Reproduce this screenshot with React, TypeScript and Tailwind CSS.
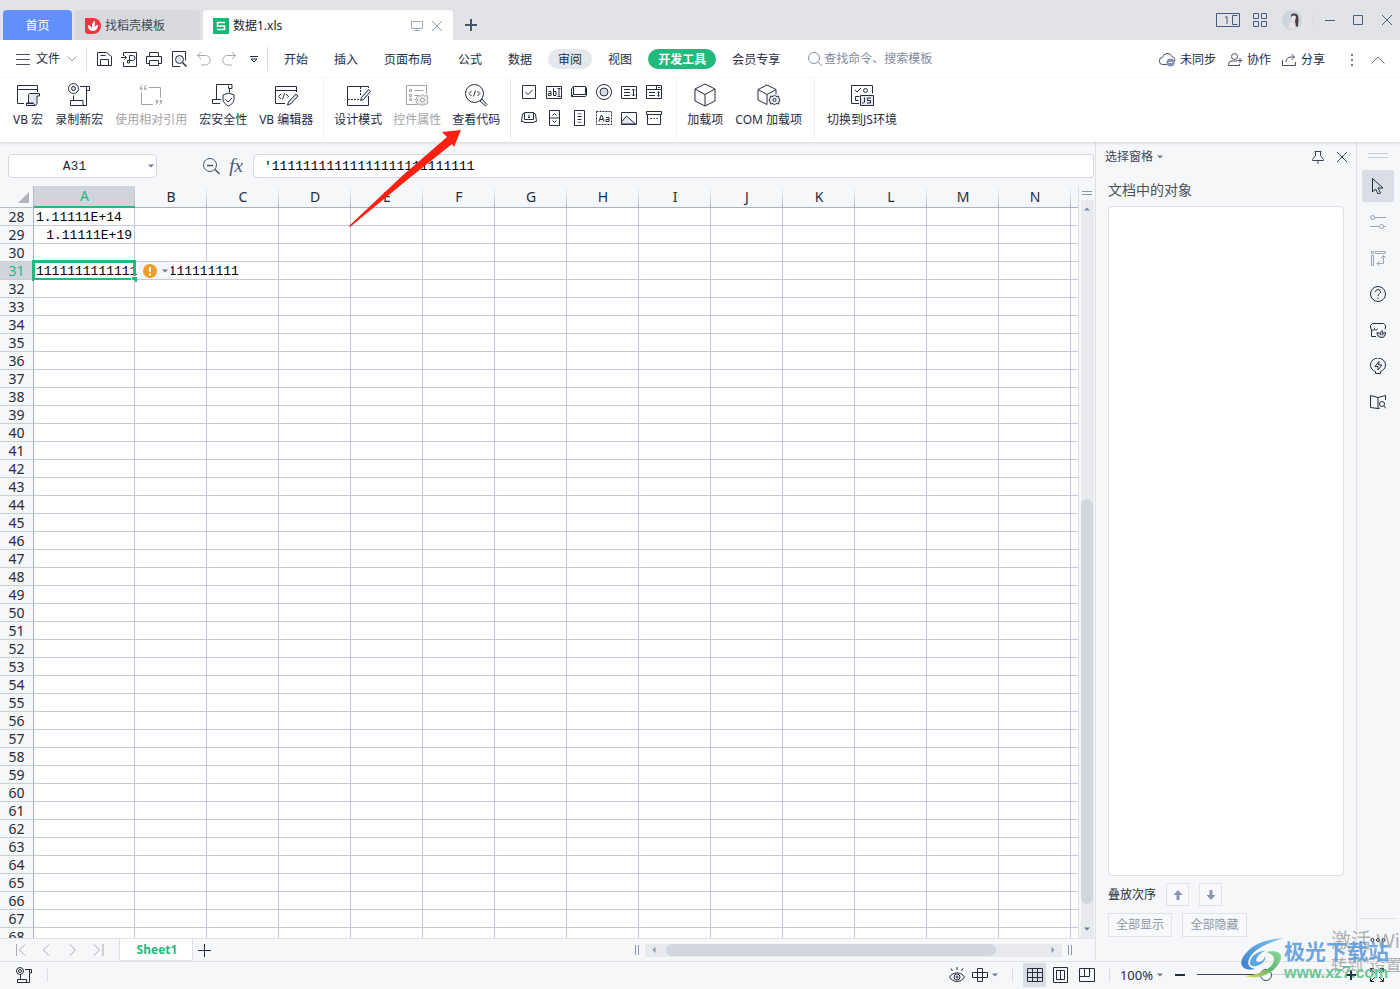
import type { ReactNode } from 'react';

const columns = ['A', 'B', 'C', 'D', 'E', 'F', 'G', 'H', 'I', 'J', 'K', 'L', 'M', 'N'];
const rows = Array.from({ length: 41 }, (_, i) => 28 + i);
const longNumber = '1'.repeat(26);

const tabs = ['开始', '插入', '页面布局', '公式', '数据', '审阅', '视图', '开发工具', '会员专享'];

function Svg({ w = 16, h = w, className = '', children }: { w?: number; h?: number; className?: string; children: ReactNode }) {
  return (
    <svg
      width={w}
      height={h}
      viewBox={`0 0 ${w} ${h}`}
      fill="none"
      stroke="currentColor"
      className={`shrink-0 ${className}`}
      aria-hidden="true"
    >
      {children}
    </svg>
  );
}

function Caret() {
  return (
    <Svg w={6} h={4} className="text-[#6f7a90]">
      <path d="M0 .5h6L3 3.5z" fill="currentColor" stroke="none" />
    </Svg>
  );
}

function Divider({ className = 'h-5' }: { className?: string }) {
  return <span className={`w-px shrink-0 bg-[#dcdee4] ${className}`} />;
}

const macroGroup = [
  {
    label: 'VB 宏',
    icon: (
      <>
        <path d="M8 20.5H1.5v-18h20V9M1.5 6.5h20" />
        <path d="M12.5 20V11.5l1-1h10v2.5h-2.5v7.5l-1.5 2h-9v-2.5h7" fill="#e4e7ed" />
        <path d="M10.5 20.5h7l1.5 2" />
      </>
    ),
  },
  {
    label: '录制新宏',
    icon: (
      <>
        <circle cx="6.5" cy="5.5" r="5" />
        <circle cx="6.5" cy="5.5" r="2" fill="#d9dce4" />
        <path d="M13 3.5h9.5v4H19M19.5 4v18.5h-16v-5h12.5v4.5M6.5 12.5v5" />
      </>
    ),
  },
  {
    label: '使用相对引用',
    disabled: true,
    icon: (
      <>
        <path d="M10 4.500h11.500v10M2.500 9.500v12H14" />
        <path d="M3.500 2c-1.500.5-2 1.500-2 3.500M7.500 2c-1.500.5-2 1.500-2 3.500" />
        <path d="M1.500 5h1.500v1.500H1.500zM5.500 5h1.500v1.500H5.500zM17 17.500h1.500V19H17zM21 17.500h1.500V19H21z" />
        <path d="M18.500 18c0 2-.5 3-2 3.500M22.500 18c0 2-.5 3-2 3.500" />
      </>
    ),
  },
  {
    label: '宏安全性',
    icon: (
      <>
        <path d="M5.500 16.500v-15h15.500v4h-3.500v-3M18.500 5.500v4M9 20.500H1.500v-4H10" />
        <path d="M17.500 10l5.500 2v4.500c0 3-2.500 5-5.500 6.500-3-1.500-5.500-3.500-5.500-6.500V12z" fill="#fff" />
        <path d="M14.500 16.500l2.500 2.500 4-4" />
      </>
    ),
  },
  {
    label: 'VB 编辑器',
    icon: (
      <>
        <path d="M11 20.500H1.500v-17h21V9M1.500 7.500h21M7 11l-2.500 2.500L7 16M10.500 10.500l-2 6M12 11l2.500 2.500-1 1" />
        <path d="M13.500 22l1-3 7.500-8 2 2-7.500 8z" fill="#e4e7ed" />
      </>
    ),
  },
];

const designGroup = [
  {
    label: '设计模式',
    icon: (
      <>
        <path d="M14 3.500H1.500v19h21V13M14 3.500h8.500V5" />
        <path d="M14.500 4v8" strokeDasharray="2 1" />
        <path d="M2 16.500h12" strokeDasharray="2 1" />
        <path d="M14.500 17.500l1-3 7-8 2 2-7 8z" fill="#e4e7ed" />
      </>
    ),
  },
  {
    label: '控件属性',
    disabled: true,
    icon: (
      <>
        <path d="M12 21.500H1.500v-19h20V11M9.500 7.500h9M9.500 12.500h4M9.500 16.500h2" />
        <path d="M4.500 6.500h2v2h-2zM4.500 11.500h2v2h-2zM4.500 15.500h2v2h-2z" />
        <path d="M17.500 11.500l2 1.500 2.500-.5 1 2.500-1 2 1 2.500-1.500 2-2.500-.5-2 1.500-2-1.500-2.500.5-1-2.500 1-2-1-2 1.500-2.500 2.500.5z" fill="#eee" />
        <circle cx="17.500" cy="17" r="2" fill="#fff" />
      </>
    ),
  },
  {
    label: '查看代码',
    icon: (
      <>
        <circle cx="10.500" cy="10.500" r="9" />
        <path d="M7.500 8L5 10.500 7.500 13M13.500 8l2.500 2.500-2.500 2.500M11.500 7.500l-2 6" />
        <path d="M16 18l2-2 5 5.500-1.500 1.500z" fill="#e4e7ed" />
      </>
    ),
  },
];

const addinGroup = [
  {
    label: '加载项',
    icon: <path d="M12 1l10 5v12l-10 5-10-5V6zM2 6l10 5.500L22 6M12 11.500V23" />,
  },
  {
    label: 'COM 加载项',
    icon: (
      <>
        <path d="M11 21.500l-9-4.500V6.500L11 2l9 4.500v5M2 6.500l9 5 9-5M11 11.500v10" />
        <path d="M18.500 12l1.500 1.500 2.500-.5.5 2.500 1 1.500-1 2-.5 2-2.500-.5-1.500 1.500-1.500-1.500-2.500.5-.5-2-1-2 1-1.500.5-2.500 2.500.5z" fill="#e4e7ed" />
        <circle cx="18.500" cy="17" r="1.500" fill="#fff" />
      </>
    ),
  },
];

const jsGroup = [
  {
    label: '切换到JS环境',
    icon: (
      <>
        <path d="M9 20.500H1.500v-18h21v8M5 7l2 2 4-4M9.500 13.500h-4v4h3" />
        <circle cx="15.500" cy="7.500" r="2" />
        <path d="M10.500 12.500h13v10h-13z" fill="#e4e7ed" />
        <path d="M14.500 14.500v4.500l-1 1h-1.500M21 15h-3.500v2.500h3V20h-3.500" />
      </>
    ),
  },
];

const controls = [
  { label: '复选框', icon: <path d="M1.500 1.500h13v13h-13zM4.500 8l2.500 2.500 4.500-4.500" /> },
  {
    label: '文本框',
    icon: <path d="M.5 2.500h15v12H.5zM2.500 7.500h2.500v4H2.500v-2H5M7.500 4v7.500H10v-4H7.500M11.500 4.500h3M11.500 12.500h3M13 4.500v8" />,
  },
  { label: '命令按钮', icon: <path d="M2.500 2.500h12v8h-12zM2.500 3L.5 4.500v8h14l1-1.500V3.500M.5 12.500l2-2" /> },
  {
    label: '选项按钮',
    icon: (
      <>
        <circle cx="8" cy="8" r="7.500" />
        <circle cx="8" cy="8" r="4" fill="#d9dce4" />
      </>
    ),
  },
  { label: '列表框', icon: <path d="M.5 2.500h15v12H.5zM3 5.500h6M3 8.500h6M3 11.500h6M12.500 5v7M11 6.500L12.500 5 14 6.500M11 10.500l1.500 1.500 1.500-1.500" /> },
  { label: '组合框', icon: <path d="M.5 1.500h15v13H.5zM.5 5.500h15M10.500 1.500v4M12 3l1 1 1-1M3 8.500h6M3 11.500h6M12.500 7.500v5M11.500 8.500l1-1 1 1M11.500 11.500l1 1 1-1" /> },
  { label: '切换按钮', icon: <path d="M3.500 2.500h9v7h-9zM3.500 3l-2 1-1 7.500h2l.5 1h10l.5-1h2l-1-7.500-2-1M8 4.500v3M7 7.500h2" /> },
  { label: '数值调节钮', icon: <path d="M3.500.5h10v15h-10zM3.500 8h10M6.500 5.500l2-2 2 2M6.500 10.500l2 2 2-2" /> },
  { label: '滚动条', icon: <path d="M3.500.5h10v15h-10zM7 4.500L8.500 3 10 4.500M6.500 6.500h4M6.500 9.500h4M7 11.500L8.500 13l1.500-1.500" /> },
  {
    label: '标签',
    icon: (
      <>
        <path d="M.5 1.500h15v13H.5z" strokeDasharray="2 1" />
        <path d="M3 11.500l2-6h1l2 6M4 9.500h3M10 7.500h3v4h-3v-2h3" />
      </>
    ),
  },
  {
    label: '图像',
    icon: (
      <>
        <path d="M.5 12l5-6 9 8H.5z" fill="#e4e7ed" />
        <path d="M.5 2.500h15v12H.5z" />
      </>
    ),
  },
  { label: '其他控件', icon: <path d="M.5 1.500h15v3H.5zM1.500 4.500v10h13v-10M4.500 8.500H6M7.500 8.500H9M10.500 8.500H12" /> },
];

type Tool = { label: string; icon: ReactNode; disabled?: boolean };

function RibbonGroup({ items, className = 'gap-[11px] px-2.5' }: { items: Tool[]; className?: string }) {
  return (
    <div className={`flex ${className}`}>
      {items.map((item) => (
        <button
          key={item.label}
          disabled={item.disabled}
          className="flex flex-col items-center pt-1 whitespace-nowrap leading-[26px] disabled:text-[#a3a3a5]"
        >
          <Svg w={25} h={24}>{item.icon}</Svg>
          {item.label}
        </button>
      ))}
    </div>
  );
}

function TitleBar() {
  return (
    <header className="flex h-10 shrink-0 items-end bg-[#e2e3e7] pl-[3px] leading-[22px]">
      <button className="h-[30px] w-[69px] rounded-t bg-[#6290fb] pt-0.5 text-white">首页</button>
      <button className="ml-[3px] flex h-[30px] w-[125px] items-center gap-1 rounded-t bg-[#d8d9dd] pt-0.5 pl-[10px] text-[#444a59]">
        <Svg>
          <path d="M0 0h8a8 8 0 010 16H3a3 3 0 01-3-3z" fill="#f5333f" stroke="none" />
          <path d="M8 13C4 13 3 10 3 7c2 .5 3.500 2 4 3.500C6.500 7 7.500 4 9.500 2.500 10.500 5 10 7 9 9.500 10 8 11.500 7 13 6.500 13 10 11.500 13 8 13z" fill="#fff" stroke="none" />
        </Svg>
        找稻壳模板
      </button>
      <div className="ml-[3px] flex h-[30px] w-[250px] items-center rounded-t bg-white px-2.5 pt-0.5 text-[#20242e]">
        <Svg>
          <path d="M0 0h16v16H0z" fill="#15b871" stroke="none" />
          <path d="M12 4.500H4.500v3.500h7v3.500H4" stroke="#fff" strokeWidth="1.500" />
        </Svg>
        <span className="ml-1 grow">数据1.xls</span>
        <Svg w={12} className="text-[#a3abc4]">
          <path d="M.5 1.500h11v7H.5zM6 8.500v2M3 10.500h6" />
        </Svg>
        <button className="ml-2" aria-label="关闭标签">
          <Svg w={12} className="text-[#8f9ab8]">
            <path d="M1 1l10 10M11 1L1 11" />
          </Svg>
        </button>
      </div>
      <button className="mb-[9px] ml-3" aria-label="新建">
        <Svg w={12} className="text-[#4a5468]">
          <path d="M6 0v12M0 6h12" strokeWidth="2" />
        </Svg>
      </button>
      <div className="ml-auto flex h-10 items-center pr-2 text-[#4a5a80]">
        <Svg w={24} h={15}>
          <path d="M.5.5h23v13H.5zM21.500 2.500h-5v9h5M19 11.500h1M9 4.500l2-1v7.500" />
        </Svg>
        <Svg w={14} className="ml-[13px]">
          <path d="M.5.5h5v5h-5zM8.500.5h5v5h-5zM.5 8.500h5v5h-5zM8.500 8.500h5v5h-5z" />
        </Svg>
        <Svg w={20} className="ml-[15px]">
          <circle cx="10" cy="10" r="10" fill="#cbd6dc" stroke="none" />
          <path d="M9 5c2-2 6-2 7 1 1 4 0 7 0 11l-2-1-1-5-4-2z" fill="#4a3a42" stroke="none" />
          <path d="M9 8c1-3 4-3 5-1l-1 4-3 1zM7 12l5 1 1 6-6-1z" fill="#eee3e4" stroke="none" />
        </Svg>
        <Divider className="ml-2.5 h-5 bg-[#cdcfd6]" />
        <button className="ml-3" aria-label="最小化">
          <Svg w={10}>
            <path d="M0 5.500h10" />
          </Svg>
        </button>
        <button className="ml-[18px]" aria-label="最大化">
          <Svg w={10}>
            <path d="M.5.5h9v9h-9z" />
          </Svg>
        </button>
        <button className="ml-[19px]" aria-label="关闭">
          <Svg w={10}>
            <path d="M0 0l10 10M10 0L0 10" />
          </Svg>
        </button>
      </div>
    </header>
  );
}

function MenuBar() {
  return (
    <nav className="flex h-[38px] shrink-0 items-center bg-white pr-[15px] pl-4">
      <button className="flex items-center">
        <Svg w={14} h={11} className="text-[#4a5060]">
          <path d="M0 .5h14M0 5.500h14M0 10.500h14" />
        </Svg>
        <span className="ml-1.5">文件</span>
        <Svg w={10} h={6} className="ml-[7px] text-[#a0a3ab]">
          <path d="M.5.5L5 5l4.500-4.500" />
        </Svg>
      </button>
      <Divider className="ml-[9px] h-6" />
      <div className="ml-[9px] flex items-center gap-[9px]">
        <button aria-label="保存">
          <Svg>
            <path d="M1.500 1.500h9l5 4v9h-14zM4.500 14.500v-6h8v6M4.500 4.500h5" />
          </Svg>
        </button>
        <button aria-label="输出为PDF">
          <Svg>
            <path d="M2.500 5V1.500h13v14h-13V11M0 6.500h5.500M3.500 4.500l2 2-2 2M8.500 12V4.500h3a2 2 0 010 5H6.500V12h2" />
          </Svg>
        </button>
        <button aria-label="打印">
          <Svg>
            <path d="M3.500 5V1.500h9V5M3.500 12.500h-3v-7h15v7h-3M3.500 9.500h9v5h-9z" />
          </Svg>
        </button>
        <button aria-label="打印预览">
          <Svg>
            <path d="M9 15.500H1.500v-15h13v9" />
            <circle cx="8.500" cy="8.500" r="4" fill="#e4e7ed" />
            <path d="M11.500 11.500l4 4" strokeWidth="1.500" />
          </Svg>
        </button>
        <button aria-label="撤销" className="text-[#a6a8ae]">
          <Svg>
            <path d="M5 1L1.500 4.500 5 8M1.500 4.500h8a4.500 4.500 0 010 9.500H5" />
          </Svg>
        </button>
        <button aria-label="恢复" className="text-[#a6a8ae]">
          <Svg>
            <path d="M11 1l3.500 3.500L11 8M14.500 4.500h-8a4.500 4.500 0 000 9.500H11" />
          </Svg>
        </button>
        <button aria-label="更多" className="ml-1">
          <Svg w={8} h={7}>
            <path d="M0 .5h8M1 3l3 3 3-3z" />
          </Svg>
        </button>
      </div>
      <Divider className="ml-[9px] h-6" />
      <div className="ml-1.5 flex gap-1.5">
        {tabs.map((tab) => (
          <button
            key={tab}
            className={`h-5 rounded-full px-2.5 leading-[22px] ${
              tab === '开发工具' ? 'bg-[#22b97d] font-bold text-white' : tab === '审阅' ? 'bg-[#e4e7ec]' : ''
            }`}
          >
            {tab}
          </button>
        ))}
      </div>
      <label className="ml-[18px] flex items-center gap-0.5 text-[#8a93a8]">
        <Svg w={14}>
          <circle cx="6" cy="6" r="5.500" />
          <path d="M10 10l4 4" />
        </Svg>
        <input
          aria-label="查找命令"
          placeholder="查找命令、搜索模板"
          className="w-[140px] outline-none placeholder:text-[#7f89a3]"
        />
      </label>
      <div className="ml-auto flex items-center pt-px whitespace-nowrap">
        <button className="flex items-center gap-1">
          <Svg w={17} h={15} className="text-[#4a5060]">
            <path d="M8 12.500H4a3.500 3.500 0 01-.5-7 5 5 0 019.500-1 4 4 0 012.500 5" />
            <circle cx="11.500" cy="10.500" r="4" fill="#8792b0" stroke="none" />
            <path d="M9.500 10.500h4" stroke="#fff" />
          </Svg>
          未同步
        </button>
        <button className="ml-3 flex items-center gap-1">
          <Svg w={15} h={14} className="text-[#4a5060]">
            <circle cx="6.500" cy="3.500" r="3" />
            <path d="M9 8H4a3.500 3.500 0 00-3.500 3.500v1h11V11M12 5v5M9.500 7.500h5" />
          </Svg>
          协作
        </button>
        <button className="ml-[11px] flex items-center gap-1">
          <Svg w={15} h={14} className="text-[#4a5060]">
            <path d="M.5 7v5.500h13V9M4 9c0-3 2-5 5-5h3M9.500 1l3 3-3 3" />
          </Svg>
          分享
        </button>
        <Divider className="ml-[9px]" />
        <button className="ml-4" aria-label="更多选项">
          <Svg w={2} h={12}>
            <path d="M0 1h2M0 6h2M0 11h2" strokeWidth="2" stroke="#777c88" />
          </Svg>
        </button>
        <button className="ml-[18px]" aria-label="折叠功能区">
          <Svg w={14} h={8} className="text-[#6b7080]">
            <path d="M.5 7.500L7 1l6.500 6.500" />
          </Svg>
        </button>
      </div>
    </nav>
  );
}

function Ribbon() {
  return (
    <div className="relative z-10 flex h-16 shrink-0 bg-white pt-px shadow-[0_1px_3px_rgba(60,70,90,0.2)]">
      <RibbonGroup items={macroGroup} className="gap-3 pr-2.5 pl-[13px]" />
      <Divider className="h-[60px] bg-[#eff0f2]" />
      <RibbonGroup items={designGroup} />
      <Divider className="h-[60px] bg-[#e3e4e8]" />
      <div className="grid grid-cols-6 content-start gap-x-[9px] gap-y-2.5 pt-[5px] pr-3.5 pl-2.5">
        {controls.map((c) => (
          <button key={c.label} aria-label={c.label}>
            <Svg>{c.icon}</Svg>
          </button>
        ))}
      </div>
      <Divider className="h-[60px] bg-[#eff0f2]" />
      <RibbonGroup items={addinGroup} className="gap-3 pr-3 pl-2.5" />
      <Divider className="h-[60px] bg-[#eff0f2]" />
      <RibbonGroup items={jsGroup} className="px-3" />
    </div>
  );
}

function FormulaBar() {
  return (
    <div className="flex h-11 shrink-0 items-center pt-1 pr-px pl-2">
      <div className="flex h-6 w-[149px] items-center rounded-sm border border-[#d5d7de] bg-white pr-0.5">
        <input
          aria-label="名称框"
          defaultValue="A31"
          className="w-0 grow pt-0.5 pr-2 text-center font-['Liberation_Mono',monospace] text-[13px] outline-none"
        />
        <Caret />
      </div>
      <button className="ml-[46px]" aria-label="缩小">
        <Svg w={17} className="text-[#4b556b]">
          <circle cx="7" cy="7" r="6.500" />
          <path d="M4 7.500h6M12 11.500l4.500 4.500" strokeWidth="1.500" />
        </Svg>
      </button>
      <button className="ml-2 w-4 font-['Liberation_Serif',serif] text-[19px] leading-6 text-[#4b556b] italic">fx</button>
      <input
        aria-label="编辑栏"
        defaultValue={`'${longNumber}`}
        className="ml-[9px] h-6 w-0 grow rounded-sm border border-[#d5d7de] bg-white pl-2.5 font-['Liberation_Mono',monospace] text-[13px] text-black outline-none"
      />
    </div>
  );
}

function cellText(col: string, row: number) {
  if (col !== 'A') return null;
  if (row === 28) return '1.11111E+14';
  if (row === 29) return <span className="block text-right">1.11111E+19</span>;
  if (row === 31) {
    return (
      <>
        {longNumber}
        <span className="absolute -inset-0.5 border-3 border-[#1fba7c]" />
        <span className="absolute -right-[3px] -bottom-[3px] size-1.5 border-t border-l border-white bg-[#1fba7c]" />
        <button
          aria-label="错误提示"
          className="absolute top-0 left-[104px] flex h-[17px] w-[33px] items-center gap-[5px] bg-[#f5f6f9] pl-[5px]"
        >
          <Svg w={14}>
            <circle cx="7" cy="7" r="7" fill="#eb9f27" stroke="none" />
            <path d="M7 3v5M7 9.500v2" stroke="#fff" strokeWidth="2" />
          </Svg>
          <Caret />
        </button>
      </>
    );
  }
  return null;
}

function Grid() {
  return (
    <div className="min-w-0 grow overflow-hidden border-r border-[#dfe1e8]">
      <table className="w-full table-fixed border-separate border-spacing-0">
        <colgroup>
          <col className="w-[34px]" />
          {columns.map((c) => (
            <col key={c} className={c === 'A' ? 'w-[101px]' : 'w-[72px]'} />
          ))}
          <col />
        </colgroup>
        <thead className="text-[14px] leading-5">
          <tr className="h-[22px]">
            <th aria-label="全选" className="border-r border-b border-[#b3bacb] p-0">
              <Svg w={12} className="mt-0.5 ml-[18px] text-[#b3b5ba]">
                <path d="M11 0v11H0z" fill="currentColor" stroke="none" />
              </Svg>
            </th>
            {columns.map((c) => (
              <th
                key={c}
                className={`relative p-0 font-normal ${
                  c === 'A' ? 'border-b-2 border-[#1fba7c] bg-[#d1d4dc] text-[#1fba7c]' : 'border-b border-[#a9b1c6]'
                }`}
              >
                {c}
                <span className="absolute inset-y-0 right-0 w-px bg-linear-to-b from-transparent to-[#b3bacb]" />
              </th>
            ))}
            <th className="border-b border-[#a9b1c6] p-0" />
          </tr>
        </thead>
        <tbody>
          {rows.map((row) => (
            <tr key={row} className="h-[18px]">
              <th
                className={`border-r border-b border-r-[#a9b1c6] border-b-[#c9cedb] p-0 text-[14px] leading-[17px] font-normal ${
                  row === 31 ? 'bg-[#d1d4dc] text-[#1fba7c]' : ''
                }`}
              >
                {row}
              </th>
              {columns.map((c) => (
                <td
                  key={c}
                  className={`border-b border-[#c3c9da] bg-white font-['Liberation_Mono',monospace] text-[13px] leading-[14px] whitespace-nowrap text-black ${
                    c === 'A' ? 'relative z-1 px-0.5 pt-[3px] pb-0' : 'p-0'
                  } ${row === 31 && c === 'B' ? '' : 'border-r'}`}
                >
                  {cellText(c, row)}
                </td>
              ))}
              <td className="border-b border-[#c3c9da] bg-white p-0" />
            </tr>
          ))}
        </tbody>
      </table>
    </div>
  );
}

function VerticalScroll() {
  return (
    <div className="flex w-4 shrink-0 flex-col items-center">
      <Svg w={10} h={14} className="text-[#8b95ad]">
        <path d="M0 5.500h10M0 8.500h10" />
      </Svg>
      <div className="flex w-[13px] grow flex-col items-center bg-[#e9eaf0] py-[7px]">
        <Svg w={6} h={4} className="text-[#7f8aa8]">
          <path d="M0 3.500h6L3 .5z" fill="currentColor" stroke="none" />
        </Svg>
        <div className="mt-auto mb-[23px] h-[56%] w-3 rounded-full bg-[#d4d6de]" />
        <Caret />
      </div>
    </div>
  );
}

function SheetBar() {
  const nav = [
    ['第一个', 'M1.500 0v12M10 .5L4.500 6l5.500 5.500'],
    ['上一个', 'M8 .5L2.500 6 8 11.500'],
    ['下一个', 'M3 .5L8.500 6 3 11.500'],
    ['最后一个', 'M1 .5L6.500 6 1 11.500M10 0v12'],
  ];
  return (
    <div className="flex h-[23px] shrink-0 items-center border-t border-[#e0e2e8]">
      <div className="flex gap-3.5 pl-[15px] text-[#a9abb1]">
        {nav.map(([label, d]) => (
          <button key={label} aria-label={label}>
            <Svg w={12}>
              <path d={d} />
            </Svg>
          </button>
        ))}
      </div>
      <button className="ml-3.5 h-[22px] w-[74px] border-x border-b border-[#e0e2e8] bg-white pl-0.5 leading-[22px] font-bold text-[#1fb980]">
        Sheet1
      </button>
      <button className="ml-[5px]" aria-label="新建工作表">
        <Svg w={13}>
          <path d="M6.500 0v13M0 6.500h13" />
        </Svg>
      </button>
      <div className="ml-auto flex w-[42%] items-center justify-between pr-[23px] text-[#8b95ad]">
        <Svg w={4} h={10}>
          <path d="M.5 0v10M3.500 0v10" />
        </Svg>
        <div className="ml-1.5 flex h-[13px] grow items-center bg-[#e9eaf0] px-[7px]">
          <Svg w={4} h={6}>
            <path d="M3.500 0v6L.5 3z" fill="currentColor" stroke="none" />
          </Svg>
          <div className="ml-2.5 h-3 w-[82%] rounded-full bg-[#d4d6de]" />
          <Svg w={4} h={6} className="ml-auto">
            <path d="M.5 0v6l3-3z" fill="currentColor" stroke="none" />
          </Svg>
        </div>
        <Svg w={4} h={10} className="ml-1.5">
          <path d="M.5 0v10M3.500 0v10" />
        </Svg>
      </div>
    </div>
  );
}

function SelectionPane() {
  return (
    <aside className="flex w-[261px] shrink-0 flex-col border-l border-[#e0e2e8] pb-6">
      <div className="flex h-[30px] items-center pr-2 pl-[9px] text-[#3d4557]">
        <button className="mr-auto flex items-center gap-1">
          选择窗格
          <Caret />
        </button>
        <button aria-label="固定">
          <Svg w={14}>
            <path d="M3.500 1.500h7M4.500 1.500v4l-3 4v1h11v-1l-3-4v-4M7 10v4" />
          </Svg>
        </button>
        <button className="ml-[11px]" aria-label="关闭窗格">
          <Svg w={12}>
            <path d="M1 1l10 10M11 1L1 11" />
          </Svg>
        </button>
      </div>
      <h2 className="mt-2 pl-3 text-[14px] leading-5 text-[#4a5060]">文档中的对象</h2>
      <div className="mt-1.5 mr-3 ml-3 grow rounded-sm border border-[#dddfe5] bg-white" />
      <div className="mt-[7px] flex items-center gap-2.5 pl-3">
        叠放次序
        <button aria-label="上移一层" className="flex size-[23px] items-center justify-center border border-[#e2e4ea] bg-[#f8f9fb] text-[#8b95ad]">
          <Svg w={10}>
            <path d="M5 0l4.500 5H6.500v5h-3V5H.5z" fill="currentColor" stroke="none" />
          </Svg>
        </button>
        <button aria-label="下移一层" className="flex size-[23px] items-center justify-center border border-[#e2e4ea] bg-[#f8f9fb] text-[#8b95ad]">
          <Svg w={10}>
            <path d="M5 10l4.500-5H6.500V0h-3v5H.5z" fill="currentColor" stroke="none" />
          </Svg>
        </button>
      </div>
      <div className="mt-[7px] flex gap-2.5 pl-3 text-[#8f97aa]">
        <button className="h-6 w-16 border border-[#e2e4ea] bg-[#f8f9fb]">全部显示</button>
        <button className="h-6 w-[65px] border border-[#e2e4ea] bg-[#f8f9fb]">全部隐藏</button>
      </div>
    </aside>
  );
}

const sideTools = [
  { label: '选择', icon: <path d="M2.500.5v13.500l3-3 2.500 5 2.500-1-2.500-5h5z" /> },
  {
    label: '属性',
    light: true,
    icon: (
      <>
        <circle cx="2.500" cy="3.500" r="2" />
        <circle cx="11.500" cy="12.500" r="2" />
        <path d="M4.500 3.500H16M0 12.500h9.500M13.500 12.500H16" />
      </>
    ),
  },
  {
    label: '分析',
    light: true,
    icon: <path d="M1.500 1.500h2v2h-2zM5.500 1.500h10v2h-10zM1.500 5.500h2v10h-2zM13.500 6v7.500H7M11 8l2.500-2.500L16 8M9.500 11L7 13.500 9.500 16" />,
  },
  {
    label: '帮助',
    icon: (
      <>
        <circle cx="8" cy="8" r="7.500" />
        <path d="M5.500 6a2.500 2.500 0 115 0c0 1.500-2.500 2-2.500 4M8 11.500V13" />
      </>
    ),
  },
  {
    label: '稻壳',
    icon: (
      <>
        <path d="M6 14.500H1.500V7.500L.5 6V3.500l2-2h11l2 2V6l-1 1M1.500 7.500c1 1.500 3 1 3-1 0 2 3 2 3 0" />
        <path d="M11.500 15.500c-3 0-4.500-2-4.500-5 1.500 0 3 1 3.500 2 0-2 .5-3 1.500-4 1 1 1 2 .5 4 .5-1 2-2 3-2 0 3-1 5-4 5z" fill="#c9cdd6" />
      </>
    ),
  },
  {
    label: '技巧',
    icon: <path d="M5.500 13.500c-3-1-5-3.500-5-6.500a7.500 7 0 0115 0c0 3-2 5.500-5 6.500v2h-5zM9 3.500L5 8.500h3v3.500l4-5H8.500z" />,
  },
  {
    label: '查阅',
    icon: (
      <>
        <path d="M8 3.500L.5 1.500v12l7.500 1zM8 3.500l7.500-2V6M8 14.500l2-.5" />
        <circle cx="12" cy="10" r="2.500" />
        <path d="M14 12l2 2.500" />
      </>
    ),
  },
];

function SideStrip() {
  return (
    <div className="flex w-11 shrink-0 flex-col items-center gap-1 border-l border-[#e0e2e8] pt-[11px] pr-px">
      <span className="mb-2 h-[5px] w-5 border-y border-[#c9ccd4]" />
      {sideTools.map((tool, i) => (
        <button
          key={tool.label}
          aria-label={tool.label}
          className={`flex size-8 items-center justify-center rounded-xs ${i === 0 ? 'bg-[#d9dde5]' : ''} ${
            tool.light ? 'text-[#9ba3b4]' : ''
          }`}
        >
          <Svg>{tool.icon}</Svg>
        </button>
      ))}
      <div className="mt-auto flex h-[43px] w-[38px] items-center justify-center border-t border-[#e0e2e8]">
        <button aria-label="更多工具">
          <Svg w={16} h={6}>
            <circle cx="2.500" cy="3" r="1.500" />
            <circle cx="8" cy="3" r="1.500" />
            <circle cx="13.500" cy="3" r="1.500" />
          </Svg>
        </button>
      </div>
    </div>
  );
}

function StatusBar() {
  return (
    <footer className="flex h-7 shrink-0 items-center border-t border-[#e0e2e8] pr-4 pb-0.5">
      <button className="ml-4" aria-label="录制宏">
        <Svg>
          <circle cx="4" cy="4" r="3.500" />
          <circle cx="4" cy="4" r="1.500" />
          <path d="M9 2.500h6.500V6H13M13.500 3v12.500h-12v-3h9v3M4.500 8v4.500" />
        </Svg>
      </button>
      <Divider className="ml-[15px] h-3.5" />
      <button className="ml-auto" aria-label="护眼模式">
        <Svg>
          <path d="M.5 10C4 4.500 12 4.500 15.500 10 12 16 4 16 .5 10zM8 0v3M2 1.500l1.500 2.500M14 1.500L12.500 4" />
          <circle cx="8" cy="10" r="3" />
          <circle cx="8" cy="10" r="1" />
        </Svg>
      </button>
      <button className="ml-[7px] flex items-center gap-1" aria-label="阅读模式">
        <Svg>
          <path d="M.5 5.500h15v5H.5zM5.500 1.500h5v13h-5z" />
        </Svg>
        <Caret />
      </button>
      <Divider className="ml-3.5 h-3.5" />
      <button className="ml-2.5 flex h-6 w-[23px] items-center justify-center rounded-xs bg-[#d9dde5]" aria-label="普通视图">
        <Svg w={17} h={14}>
          <path d="M1.500.5h15v13h-15zM1.500 4.500h15M1.500 9.500h15M6.500.5v13M11.500.5v13" />
        </Svg>
      </button>
      <button className="ml-[7px]" aria-label="分页预览">
        <Svg>
          <path d="M.5.5h14v15H.5zM3.500 3.500h8v9h-8zM7.500 3.500v9" />
        </Svg>
      </button>
      <button className="ml-2.5" aria-label="页面布局视图">
        <Svg h={14}>
          <path d="M.5.5h15v13H.5zM5.500.5v8M.5 8.500h10M10.500.5v8" />
        </Svg>
      </button>
      <Divider className="ml-3.5 h-3.5" />
      <button className="ml-2.5 flex items-center gap-1 text-[13px]">
        100%
        <Caret />
      </button>
      <button className="ml-3" aria-label="缩小显示">
        <Svg w={10}>
          <path d="M0 5h10" strokeWidth="2" />
        </Svg>
      </button>
      <input
        type="range"
        aria-label="显示比例"
        defaultValue={49}
        className="ml-3 h-3 w-[141px] appearance-none bg-[linear-gradient(to_right,#3d4557_49%,#d0d3da_49%)] bg-[length:100%_1px] bg-center bg-no-repeat [&::-webkit-slider-thumb]:size-3 [&::-webkit-slider-thumb]:appearance-none [&::-webkit-slider-thumb]:rounded-full [&::-webkit-slider-thumb]:border [&::-webkit-slider-thumb]:border-[#3d4557] [&::-webkit-slider-thumb]:bg-white"
      />
      <button className="ml-2" aria-label="放大显示">
        <Svg w={10}>
          <path d="M0 5h10M5 0v10" strokeWidth="2" />
        </Svg>
      </button>
      <button className="ml-3.5" aria-label="全屏显示">
        <Svg w={14}>
          <path d="M.5 4V.5H4M.5.5L5 5M10 .5h3.500V4M13.500.5L9 5M.5 10v3.500H4M.5 13.500L5 9M10 13.500h3.500V10M13.500 13.500L9 9" />
        </Svg>
      </button>
    </footer>
  );
}

function Watermark() {
  return (
    <div className="pointer-events-none absolute right-0 bottom-0 h-[60px] w-40 overflow-hidden whitespace-nowrap">
      <div className="absolute top-0 left-[91px] text-[#8d9094]/70">
        <p className="text-[20px] leading-6">激活 Wi</p>
        <p className="text-[16px] leading-6">转到"设置"</p>
      </div>
      <svg width="46" height="42" viewBox="0 0 46 42" className="absolute top-2 left-0">
        <defs>
          <linearGradient id="wave" x1="0" y1="1" x2="1" y2="0">
            <stop offset="0" stopColor="#3a7fd0" />
            <stop offset="1" stopColor="#7cc4f2" />
          </linearGradient>
          <linearGradient id="leaf" x1="0" y1="1" x2="1" y2="0">
            <stop offset="0" stopColor="#e8e04a" />
            <stop offset="0.5" stopColor="#5cb86a" />
            <stop offset="1" stopColor="#8fd8a4" />
          </linearGradient>
        </defs>
        <path d="M44 1C30 2 18 5 10 12 2 19-1 26 3 30c3 3 7 3 12 2-6-1-8-5-6-10C13 13 27 6 44 1z" fill="url(#wave)" />
        <path d="M25 14c-8 0-15 6-15 12 0 4 5 4 9 2 5-2 7-6 6-9-1 4-4 6-7 6-4 0-1-8 7-11z" fill="#5aa5e4" />
        <path d="M26 15c10-2 15 0 15 5 0 8-12 19-23 20-4 1-9 0-14-1 13-1 22-5 27-10 5-6 4-12-5-14z" fill="url(#leaf)" />
      </svg>
      <div className="absolute top-2.5 left-11 font-bold">
        <p className="text-[21px] leading-6 text-[#5b9bdc]/90">极光下载站</p>
        <p className="font-['Liberation_Sans',sans-serif] text-[16px] leading-5 text-[#55c286]/90">www.xz7.com</p>
      </div>
    </div>
  );
}

export default function App() {
  return (
    <div className="relative flex h-screen flex-col overflow-hidden bg-[#f5f7f9] font-['Noto_Sans','Noto_Sans_CJK_SC',sans-serif] text-[12px] leading-5 text-[#262d3f]">
      <TitleBar />
      <MenuBar />
      <Ribbon />
      <main className="flex min-h-0 grow">
        <section className="flex min-w-0 grow flex-col">
          <FormulaBar />
          <div className="flex min-h-0 grow">
            <Grid />
            <VerticalScroll />
          </div>
          <SheetBar />
        </section>
        <SelectionPane />
        <SideStrip />
      </main>
      <StatusBar />
      <svg width="116" height="100" viewBox="0 0 116 100" className="pointer-events-none absolute top-32 left-[347px] z-20">
        <path d="M2 98L55 48 100 9l-5-5 19-2-7 17-2-3L60 52 3 99z" fill="#fb2010" />
      </svg>
      <Watermark />
    </div>
  );
}
